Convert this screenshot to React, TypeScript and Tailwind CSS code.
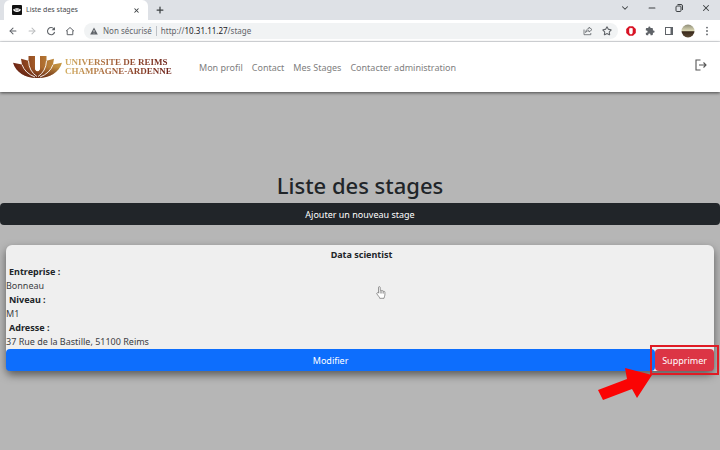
import React from "react";
import {
  ArrowLeft,
  ArrowRight,
  ChevronDown,
  Minus,
  Plus,
  Star,
  X,
} from "lucide-react";

const menu = ["Mon profil", "Contact", "Mes Stages", "Contacter administration"];

const details = [
  { label: "Entreprise :", value: "Bonneau" },
  { label: "Niveau :", value: "M1" },
  { label: "Adresse :", value: "37 Rue de la Bastille, 51100 Reims" },
];

function TabBar() {
  return (
    <div className="flex h-5 items-stretch justify-between bg-[#dee1e6] pl-1">
      <div className="flex items-center">
        <div className="flex h-full w-36 items-center rounded-t-md bg-white pr-1 pl-2">
          <svg className="h-[10px] w-[10px]" viewBox="0 0 10 10" aria-hidden="true">
            <rect width="10" height="10" rx="1" fill="#111" />
            <path d="M1 4.2l1.6.1.2-.8 1.3.1.3-.6h1.2l.3.6 1.3-.1.2.8L9 4.2C8.6 6 7 7 5 7S1.4 6 1 4.2z" fill="#fff" />
            <path d="M5 3v3M3.2 4l.8 2M6.8 4L6 6" stroke="#111" strokeWidth=".4" />
          </svg>
          <span className="ml-1 grow text-[7px] text-[#45484c]">Liste des stages</span>
          <button aria-label="Fermer l'onglet" className="p-1">
            <X className="h-[7px] w-[7px] text-[#3c4043]" strokeWidth={3.5} />
          </button>
        </div>
        <button aria-label="Nouvel onglet" className="ml-[3px] p-1">
          <Plus className="h-[10px] w-[10px] text-[#3c4043]" strokeWidth={3} />
        </button>
      </div>
      <div className="flex items-center gap-[17px] pr-[9px] pb-1 text-[#3c4043]">
        <button aria-label="Rechercher dans les onglets">
          <ChevronDown className="h-[10px] w-[10px]" strokeWidth={2.5} />
        </button>
        <button aria-label="Réduire">
          <Minus className="h-[10px] w-[10px]" strokeWidth={2.5} />
        </button>
        <button aria-label="Agrandir">
          <svg className="h-[10px] w-[10px]" viewBox="0 0 10 10" fill="none" stroke="currentColor" aria-hidden="true">
            <rect x="2" y="3" width="5" height="5.5" rx="1" />
            <path d="M3.5 1.5h3.5a1.5 1.5 0 0 1 1.5 1.5v4" />
          </svg>
        </button>
        <button aria-label="Fermer">
          <X className="h-[10px] w-[10px]" strokeWidth={2.5} />
        </button>
      </div>
    </div>
  );
}

function Toolbar() {
  return (
    <div className="flex h-[22px] items-center border-b border-[#e3e5e8] bg-white px-2 text-[#5f6368]">
      <div className="flex items-center gap-[9px]">
        <button aria-label="Précédent">
          <ArrowLeft className="h-[10px] w-[10px]" strokeWidth={2.5} />
        </button>
        <button aria-label="Suivant">
          <ArrowRight className="h-[10px] w-[10px] text-[#babcbe]" strokeWidth={2.5} />
        </button>
        <button aria-label="Actualiser">
          <svg className="h-[10px] w-[10px]" viewBox="0 0 10 10" aria-hidden="true">
            <path d="M8 3A3.6 3.6 0 1 0 8.6 6" fill="none" stroke="currentColor" strokeWidth="1.1" />
            <path d="M9 .9v3.4H5.6z" fill="currentColor" />
          </svg>
        </button>
        <button aria-label="Accueil">
          <svg className="h-[10px] w-[10px]" viewBox="0 0 10 10" aria-hidden="true">
            <path d="M1 5.2L5 1.5l4 3.7M2.2 4.5v4.2h5.600V4.500" fill="none" stroke="currentColor" strokeWidth="1" />
          </svg>
        </button>
      </div>
      <div className="ml-[9px] flex h-4 grow items-center rounded-full bg-[#f1f3f4] px-[6px]">
        <svg className="h-2 w-2" viewBox="0 0 8 8" aria-hidden="true">
          <path d="M4 .6L7.8 7.4H.2z" fill="currentColor" />
          <path d="M4 3v2M4 5.700v.8" stroke="#f1f3f4" strokeWidth=".8" />
        </svg>
        <span className="ml-[5px] text-[8px]">Non sécurisé</span>
        <span className="mx-1 h-[10px] w-px bg-[#bdc1c6]" />
        <span className="grow text-[8px]">
          http://<span className="text-[#202124]">10.31.11.27</span>/stage
        </span>
        <button aria-label="Partager" className="mr-[9px]">
          <svg className="h-[10px] w-[10px]" viewBox="0 0 10 10" fill="none" stroke="currentColor" strokeWidth=".8" aria-hidden="true">
            <path d="M1 3.5v5.2h6.800V7" />
            <path d="M6 1.2l3 2.4-3 2.400V4.700C4.300 4.700 3.200 5.300 2.600 6.600 2.800 4.200 4 2.800 6 2.600z" />
          </svg>
        </button>
        <button aria-label="Ajouter aux favoris">
          <Star className="h-[10px] w-[10px]" strokeWidth={2.5} />
        </button>
      </div>
      <div className="ml-2 flex items-center gap-[9px]">
        <button aria-label="Bloqueur de publicités">
          <svg className="h-[10px] w-[10px]" viewBox="0 0 10 10" aria-hidden="true">
            <path d="M3 .2h4L9.800 3v4L7 9.800H3L.2 7V3z" fill="#d81324" />
            <path d="M3.200 2.800c0-.8.9-.8 1-.2.1-1 1.100-1 1.200-.1.2-.6 1.300-.5 1.300.4v3C6.700 7.400 6 8.300 5 8.300S3.200 7.400 3.200 6z" fill="#fff" />
          </svg>
        </button>
        <button aria-label="Extensions">
          <svg className="h-[10px] w-[10px]" viewBox="0 0 24 24" fill="currentColor" aria-hidden="true">
            <path d="M20.500 11H19V7a2 2 0 0 0-2-2h-4V3.500a2.500 2.500 0 0 0-5 0V5H4a2 2 0 0 0-2 2v3.800h1.500a2.700 2.700 0 0 1 0 5.400H2V20a2 2 0 0 0 2 2h3.800v-1.500a2.700 2.700 0 0 1 5.400 0V22H17a2 2 0 0 0 2-2v-4h1.500a2.500 2.500 0 0 0 0-5z" />
          </svg>
        </button>
        <div className="flex items-center gap-[7px]">
          <button aria-label="Panneau latéral">
            <svg className="h-[10px] w-[10px]" viewBox="0 0 10 10" aria-hidden="true">
              <rect x="1.500" y="1.500" width="7" height="7" fill="none" stroke="currentColor" />
              <path d="M6.500 1H9v8H6.500z" fill="currentColor" />
            </svg>
          </button>
          <button aria-label="Compte">
            <svg className="h-[14px] w-[14px]" viewBox="0 0 14 14" aria-hidden="true">
              <defs>
                <linearGradient id="sky" x1="0" y1="0" x2="0" y2="1">
                  <stop offset="0" stopColor="#8f8d78" />
                  <stop offset=".5" stopColor="#dfdcb8" />
                  <stop offset=".55" stopColor="#3a2a1c" />
                  <stop offset="1" stopColor="#5b4a35" />
                </linearGradient>
              </defs>
              <circle cx="7" cy="7" r="6.500" fill="url(#sky)" />
            </svg>
          </button>
          <button aria-label="Menu">
            <svg className="h-[10px] w-[10px]" viewBox="0 0 10 10" fill="currentColor" aria-hidden="true">
              <circle cx="5" cy="1.600" r=".9" />
              <circle cx="5" cy="5" r=".9" />
              <circle cx="5" cy="8.400" r=".9" />
            </svg>
          </button>
        </div>
      </div>
    </div>
  );
}

function Logo() {
  return (
    <a href="#" className="flex items-center gap-[3px]">
      <svg className="h-[22px] w-[49px]" viewBox="0 0 49 23" preserveAspectRatio="none" aria-hidden="true">
        <defs>
          <linearGradient id="petal" gradientUnits="userSpaceOnUse" x1="0" y1="10" x2="49" y2="8">
            <stop offset="0" stopColor="#6b2214" />
            <stop offset=".5" stopColor="#a8622a" />
            <stop offset="1" stopColor="#c69a45" />
          </linearGradient>
          <linearGradient id="base" x1="0" y1="0" x2="0" y2="1">
            <stop offset=".5" stopColor="#4e130c" stopOpacity="0" />
            <stop offset="1" stopColor="#4e130c" stopOpacity=".7" />
          </linearGradient>
        </defs>
        <path d="M0 7L9 9 8 3 15.500 5V0H22V14Q24.500 18 27 14V0h6.500v5L41 3l-1 6 9-2C46 17 37 23 24.500 23S3 17 0 7z" fill="url(#petal)" />
        <path d="M0 7L9 9 8 3 15.500 5V0H22V14Q24.500 18 27 14V0h6.500v5L41 3l-1 6 9-2C46 17 37 23 24.500 23S3 17 0 7z" fill="url(#base)" />
        <path d="M9 9Q12 18 22 22M40 9Q37 18 27 22M15.500 5Q16 16 24 21.500M33.500 5Q33 16 25 21.500" fill="none" stroke="#fff" strokeWidth=".9" />
      </svg>
      <span className="flex w-[109px] flex-col bg-linear-to-r from-[#d3ae60] via-[#9c5633] to-[#6b1f1a] bg-clip-text font-['Liberation_Serif',serif] text-[9px] leading-[9px] font-bold whitespace-nowrap text-transparent">
        <span>UNIVERSITE DE REIMS</span>
        <span>CHAMPAGNE-ARDENNE</span>
      </span>
    </a>
  );
}

function SiteHeader() {
  return (
    <header className="relative flex h-[50px] items-center bg-white pr-[13px] pl-[13px] shadow-[0_1px_3px_rgba(0,0,0,0.6)]">
      <Logo />
      <nav className="ml-[25px] flex gap-[9px] pt-0.5 text-[9px] text-[#808080]">
        {menu.map((item) => (
          <a key={item} href="#">
            {item}
          </a>
        ))}
      </nav>
      <button aria-label="Se déconnecter" className="mb-1 ml-auto text-[#555]">
        <svg className="h-3 w-3" viewBox="0 0 12 12" fill="none" stroke="currentColor" aria-hidden="true">
          <path d="M5.500 1H1v10h4.500M4 6h7M8.500 3.500L11 6 8.500 8.500" strokeWidth="1.100" />
        </svg>
      </button>
    </header>
  );
}

function HandCursor() {
  return (
    <svg className="absolute top-[41px] left-1/2 ml-4 h-[13px] w-[10px]" viewBox="0 0 10 13" aria-hidden="true">
      <path
        d="M2.500 7V1.500C2.500.4 4.200.4 4.200 1.500V4.700C4.600 4 5.700 4.200 5.800 5 6.300 4.400 7.300 4.700 7.300 5.400 7.900 5 8.900 5.400 8.900 6.200V9C8.900 10.500 8 11 8 12.300H3.700C3.700 11 1.700 9.500.8 7.700.5 6.800 1.600 6.400 2.500 7zM4.200 5v2.500M5.800 5.200v2.300M7.300 5.600v2"
        fill="#fff"
        stroke="#555"
        strokeWidth=".6"
      />
    </svg>
  );
}

function StageCard() {
  return (
    <article className="relative mx-[6px] mt-5 rounded-md bg-[#efefef] text-[9px] text-[#212529] shadow-[0_4px_8px_rgba(0,0,0,0.5)]">
      <h2 className="pl-[3px] text-center leading-5 font-bold">Data scientist</h2>
      <dl className="leading-[14px]">
        {details.map((item) => (
          <React.Fragment key={item.label}>
            <dt className="pl-[3px] font-bold">{item.label}</dt>
            <dd className="text-[#3c4043]">{item.value}</dd>
          </React.Fragment>
        ))}
      </dl>
      <div className="flex h-[22px] text-white">
        <button className="grow rounded bg-[#0d6efd] pt-px">Modifier</button>
        <div className="relative flex">
          <button className="rounded bg-[#dc3545] px-[7px] pt-px">Supprimer</button>
          <span className="absolute -inset-x-[5px] -top-1 -bottom-1 border-2 border-[#e01b24]" />
          <svg className="absolute top-[19px] right-[62px] h-[33px] w-[54px]" viewBox="0 0 54 33" aria-hidden="true">
            <path d="M0 22L29 11 27 0 54 7 39 30 34 21 5 32z" fill="#fb0404" />
          </svg>
        </div>
      </div>
      <HandCursor />
    </article>
  );
}

export default function App() {
  return (
    <div className="flex min-h-screen flex-col overflow-x-hidden bg-[#b6b6b6] font-['Noto_Sans',sans-serif]">
      <TabBar />
      <Toolbar />
      <SiteHeader />
      <main className="grow pt-[77px] pb-5">
        <h1 className="mb-0.5 text-center text-[22px] leading-8 font-medium text-[#212529]">Liste des stages</h1>
        <button className="block h-[22px] w-full rounded bg-[#212529] pt-px text-[9px] text-white">
          Ajouter un nouveau stage
        </button>
        <StageCard />
      </main>
    </div>
  );
}
